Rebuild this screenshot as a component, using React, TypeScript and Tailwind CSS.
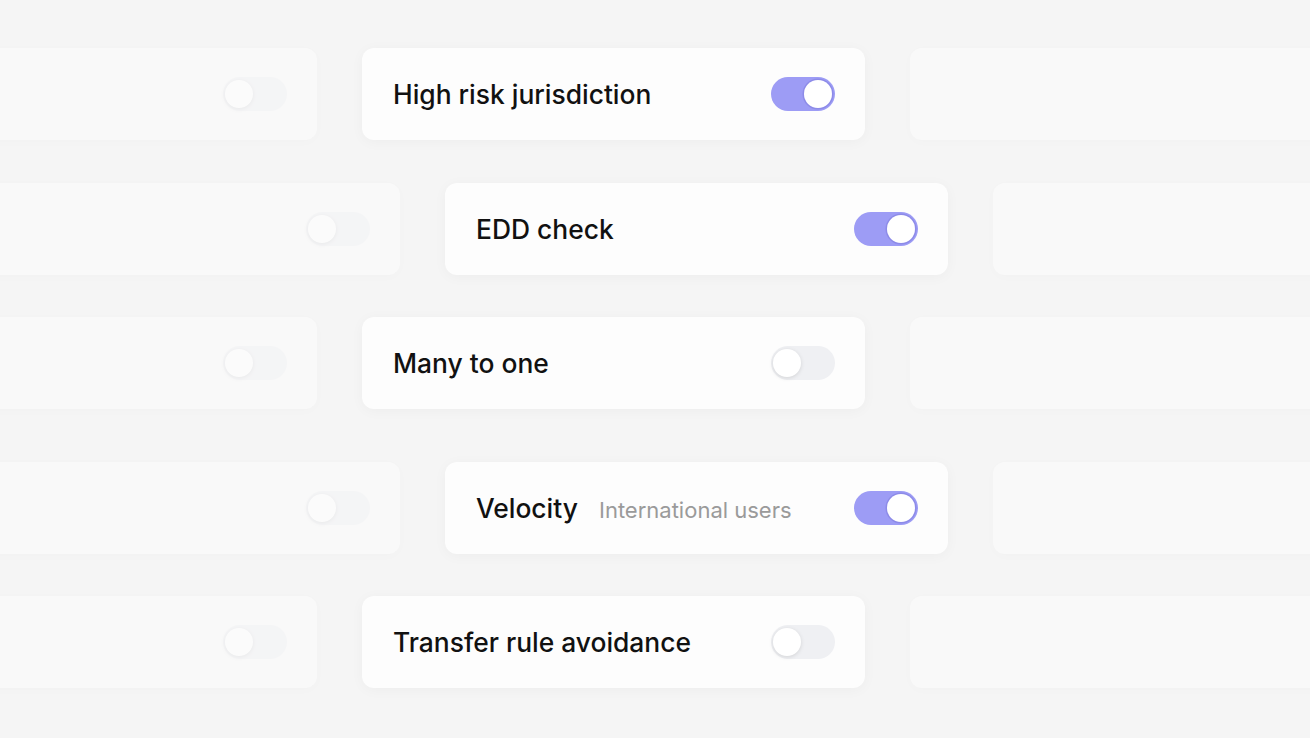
import React from "react";

function Toggle({ on }: { on: boolean }) {
  return on ? (
    <div className="relative h-[34px] w-[64px] shrink-0 rounded-full bg-[#9d9cf5]">
      <div className="absolute right-[3px] top-[3px] h-[28px] w-[28px] rounded-full bg-white shadow-[0_0_0_1.5px_#8d8be8]" />
    </div>
  ) : (
    <div className="relative h-[34px] w-[64px] shrink-0 rounded-full bg-[#eff0f3]">
      <div className="absolute left-[2px] top-[3px] h-[28px] w-[28px] rounded-full bg-white shadow-[0_1px_4px_rgba(0,0,0,0.12)]" />
    </div>
  );
}

function SideCard({ toggle }: { toggle?: boolean }) {
  return (
    <div className="flex h-[92px] w-[503px] shrink-0 items-center justify-end rounded-[12px] bg-[#f9f9f9] pr-[30px] shadow-[0_2px_12px_rgba(0,0,0,0.015)]">
      {toggle && (
        <div className="opacity-40">
          <Toggle on={false} />
        </div>
      )}
    </div>
  );
}

function MainCard({ title, sub, on }: { title: string; sub?: string; on: boolean }) {
  return (
    <div className="flex h-[92px] w-[503px] shrink-0 items-center justify-between rounded-[12px] bg-[#fdfdfd] pl-[31px] pr-[30px] shadow-[0_2px_14px_rgba(0,0,0,0.035)]">
      <div className="flex items-baseline gap-[21px]">
        <span className="text-[26.4px] font-medium leading-none text-[#111111]">{title}</span>
        {sub && <span className="text-[22px] leading-none text-[#9a9a9a]">{sub}</span>}
      </div>
      <Toggle on={on} />
    </div>
  );
}

function Row({ shift, title, sub, on, mt }: { shift: "a" | "b"; title: string; sub?: string; on: boolean; mt: string }) {
  return (
    <div className={`flex gap-[45px] ${shift === "a" ? "ml-[-186px]" : "ml-[-103px]"} ${mt}`}>
      <SideCard toggle />
      <MainCard title={title} sub={sub} on={on} />
      <SideCard />
    </div>
  );
}

export default function App() {
  return (
    <div
      className="h-[738px] w-[1310px] overflow-hidden bg-[#f5f5f5] pt-[48px]"
      style={{ fontFamily: "Inter, 'Noto Sans', sans-serif" }}
    >
      <Row shift="a" title="High risk jurisdiction" on mt="mt-0" />
      <Row shift="b" title="EDD check" on mt="mt-[43px]" />
      <Row shift="a" title="Many to one" on={false} mt="mt-[42px]" />
      <Row shift="b" title="Velocity" sub="International users" on mt="mt-[53px]" />
      <Row shift="a" title="Transfer rule avoidance" on={false} mt="mt-[42px]" />
    </div>
  );
}
